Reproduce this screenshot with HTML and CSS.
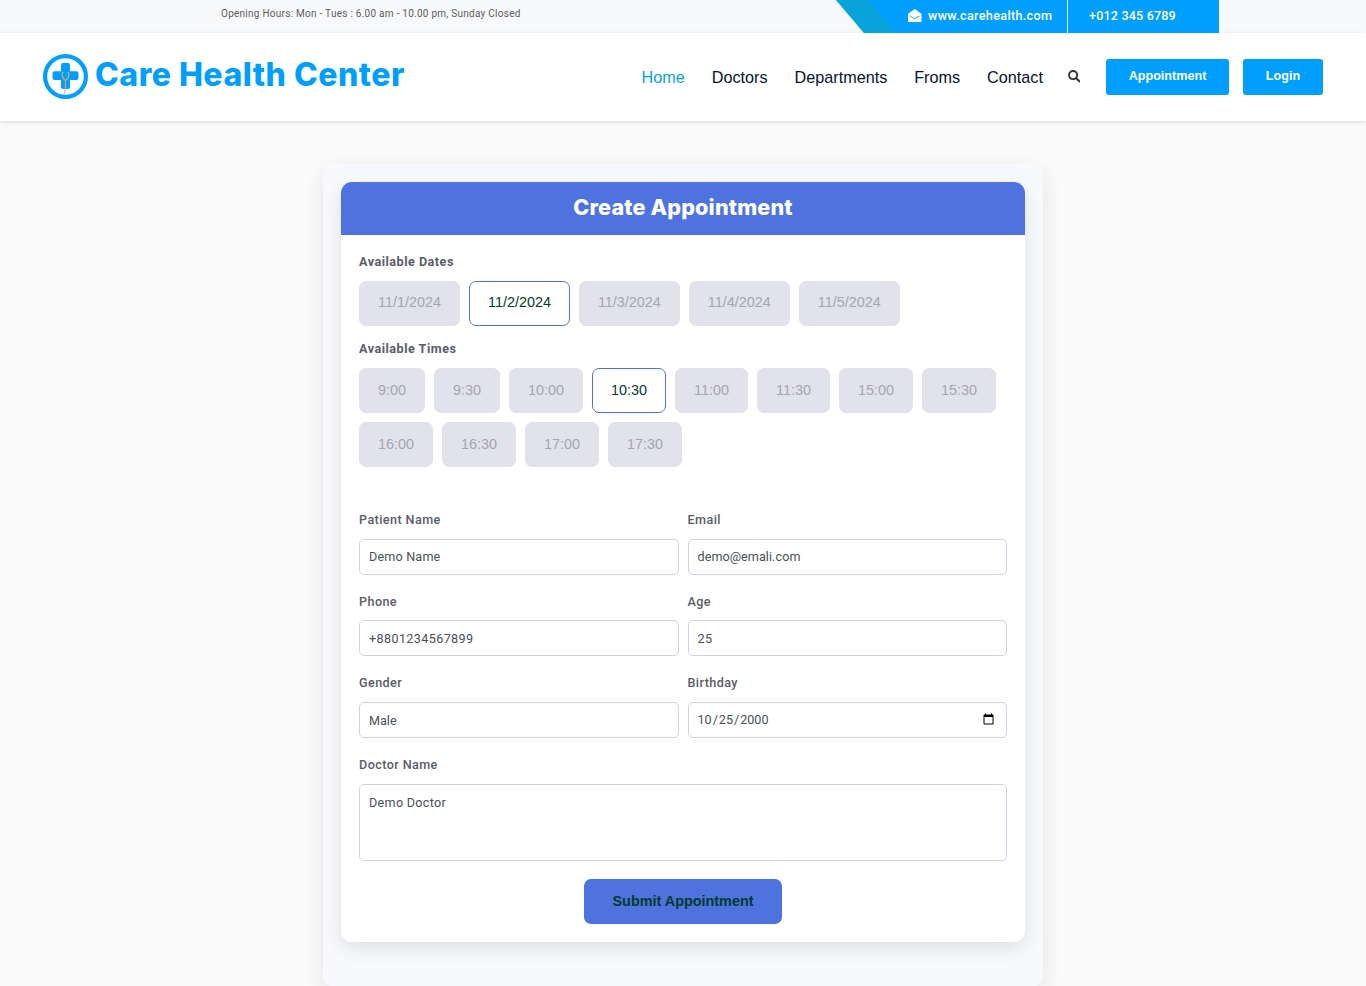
FILE: index.html
```html
<!DOCTYPE html>
<html lang="en">
<head>
<meta charset="utf-8">
<title>Care Health Center</title>
<link rel="stylesheet" href="styles.css">
</head>
<body>
<div class="topbar">
  <div class="hours">Opening Hours: Mon - Tues : 6.00 am - 10.00 pm, Sunday Closed</div>
  <div class="contact-strip">
    <div class="strip-mail">
      <svg class="mail" viewBox="0 0 14 14"><path d="M7 0 13.2 4.3Q14 4.9 14 5.8V12.6Q14 13.6 13 13.6H1Q0 13.6 0 12.6V5.8Q0 4.9.8 4.3Z" fill="#fff"/><path d="M2.3 7.2 6 9.7Q7 10.3 8 9.7L11.7 7.2" fill="none" stroke="#009fff" stroke-width="1"/></svg>
      <span>www.carehealth.com</span>
    </div>
    <div class="strip-phone">+012 345 6789</div>
  </div>
</div>
<header class="header">
  <div class="brand">
    <svg class="logo" viewBox="0 0 45 45">
      <circle cx="22.5" cy="22.5" r="20.4" fill="#fff" stroke="#009fff" stroke-width="4.2"/>
      <path d="M20 9H25.200Q27 9 27 11V17.200H33.500Q35.500 17.200 35.500 19.200V24Q35.500 26 33.500 26H27V33Q27 35 25.200 35H20Q18 35 18 33V26H11.500Q9.500 26 9.500 24V19.200Q9.500 17.200 11.500 17.200H18V11Q18 9 20 9Z" fill="#009fff"/>
      <path d="M20.600 18.200Q18.800 18 19.300 21Q19.700 25 22.500 26.500Q25.300 25 25.700 21Q26.200 18 24.400 18.200M22.500 26.500V35Q22.300 38.500 20.700 39.700" fill="none" stroke="#e0ad48" stroke-width="1.100"/>
    </svg>
    <span class="name">Care Health Center</span>
  </div>
  <nav class="nav">
    <a class="active">Home</a><a>Doctors</a><a>Departments</a><a>Froms</a><a>Contact</a>
  </nav>
  <svg class="search" viewBox="0 0 12 12"><circle cx="4.900" cy="4.900" r="3.900" fill="none" stroke="#333" stroke-width="1.800"/><path d="M7.800 7.800 10.900 10.900" stroke="#333" stroke-width="2" stroke-linecap="round"/></svg>
  <a class="btn">Appointment</a>
  <a class="btn login">Login</a>
</header>
<main class="panel">
  <form class="card">
    <h1 class="card-head">Create Appointment</h1>
    <div class="card-body">
      <div class="label strong">Available Dates</div>
      <div class="pills">
        <span class="pill">11/1/2024</span><span class="pill on">11/2/2024</span><span class="pill">11/3/2024</span><span class="pill">11/4/2024</span><span class="pill">11/5/2024</span>
      </div>
      <div class="label strong times">Available Times</div>
      <div class="pills slots">
        <span class="pill">9:00</span><span class="pill">9:30</span><span class="pill">10:00</span><span class="pill on">10:30</span><span class="pill">11:00</span><span class="pill">11:30</span><span class="pill">15:00</span><span class="pill">15:30</span><span class="pill">16:00</span><span class="pill">16:30</span><span class="pill">17:00</span><span class="pill">17:30</span>
      </div>
      <div class="fields">
        <label class="field"><span class="label">Patient Name</span><input class="input" value="Demo Name"></label>
        <label class="field"><span class="label">Email</span><input class="input email" value="demo@emali.com"></label>
        <label class="field"><span class="label low">Phone</span><input class="input phone" value="+8801234567899"></label>
        <label class="field"><span class="label low">Age</span><input class="input phone" value="25"></label>
        <label class="field"><span class="label">Gender</span><input class="input gender" value="Male"></label>
        <label class="field"><span class="label">Birthday</span><input class="input date" type="date" value="2000-10-25"></label>
        <label class="field wide"><span class="label">Doctor Name</span><textarea class="input area">Demo Doctor</textarea></label>
      </div>
      <button class="submit" type="button">Submit Appointment</button>
    </div>
  </form>
</main>
</body>
</html>
```
FILE: styles.css
```css
* { box-sizing: border-box; }
body {
  margin: 0;
  height: 986px;
  overflow: hidden;
  background: #fafafa;
  font-family: Roboto, "Liberation Sans", sans-serif;
  color: #5a5c69;
}
.topbar {
  display: flex;
  justify-content: space-between;
  height: 33px;
  padding: 0 147px 0 221px;
  background: #f8f9fa;
}
.hours {
  font-size: 10px;
  line-height: 27px;
  letter-spacing: 0.26px;
  color: #5c5c5c;
}
.contact-strip {
  display: flex;
  width: 383px;
  padding-left: 72px;
  clip-path: polygon(0 0, 100% 0, 100% 100%, 28px 100%);
  background: #009fff;
  position: relative;
  color: #fff;
  font-size: 12.600px;
  font-weight: 500;
  line-height: 32px;
}
.contact-strip::before {
  content: "";
  position: absolute;
  left: 0;
  top: 0;
  width: 60px;
  height: 33px;
  background: #08a3da;
  clip-path: polygon(0 0, 32px 0, 60px 100%, 28px 100%);
}
.strip-mail {
  display: flex;
  align-items: flex-start;
  gap: 6.500px;
  width: 160px;
  border-right: 1px solid #d9f0ff;
  letter-spacing: 0.33px;
}
.mail { width: 13.500px; height: 13.500px; margin-top: 8.500px; }
.strip-phone { padding-left: 21px; letter-spacing: 0.16px; }
.header {
  display: flex;
  align-items: flex-start;
  height: 88px;
  padding: 0 43px;
  background: #fff;
  box-shadow: 0 1px 4px rgba(0, 0, 0, 0.13);
}
.brand { display: flex; gap: 7px; width: 598.600px; padding-top: 21px; }
.logo { width: 45px; height: 45px; }
.name {
  font-family: Inter, sans-serif;
  font-size: 32px;
  line-height: 41px;
  font-weight: 800;
  letter-spacing: 0.5px;
  color: #009fff;
  white-space: nowrap;
}
.nav {
  display: flex;
  gap: 27px;
  padding-top: 34px;
  font: 16.200px/20px "Liberation Sans", sans-serif;
  color: #04142f;
}
.active { color: #0aa2dc; }
.search { width: 12.500px; height: 12.500px; margin: 37px 25px 0 25px; }
.btn {
  width: 123px;
  height: 36px;
  margin-top: 26px;
  border-radius: 3px;
  background: #009fff;
  color: #fff;
  text-align: center;
  font: bold 12.600px/34px "Liberation Sans", sans-serif;
}
.header .btn:not(.login) { margin-left: auto; }
.login { width: 80px; margin-left: 14px; }
.panel {
  width: 720px;
  height: 823px;
  margin: 43px auto 0;
  padding: 18px;
  border-radius: 11px;
  background: #f8f9fc;
  box-shadow: 0 7px 22px rgba(0, 0, 0, 0.09);
}
.card {
  height: 760px;
  border-radius: 11px;
  background: #fff;
  overflow: hidden;
  box-shadow: 0 7px 18px rgba(0, 0, 0, 0.1);
}
.card-head {
  margin: 0;
  height: 53px;
  background: #4e73df;
  color: #fff;
  text-align: center;
  font-family: Inter, sans-serif;
  font-size: 21.600px;
  line-height: 51px;
  font-weight: 800;
  letter-spacing: 0.15px;
}
.card-body { padding: 18px; }
.label {
  display: block;
  font-size: 12.600px;
  line-height: 18px;
  font-weight: 500;
  letter-spacing: 0.42px;
}
.low { padding-top: 1px; margin-bottom: -1px; }
.strong { font-weight: 700; letter-spacing: 0.5px; }
.times { margin-top: 14px; }
.pills { display: flex; flex-wrap: wrap; gap: 9px; margin-top: 10px; }
.pill {
  height: 45px;
  padding: 0 18px;
  border: 1px solid #e2e2ec;
  border-radius: 7px;
  background: #e2e2ec;
  color: #a3a6b0;
  font: 14.400px/41px "Liberation Sans", sans-serif;
}
.slots .pill { line-height: 43px; }
.pill.on { border-color: #4e73df; background: #fff; color: #013b2b; }
.fields {
  display: grid;
  grid-template-columns: 1fr 1fr;
  column-gap: 9px;
  row-gap: 17.700px;
  margin-top: 43.700px;
}
.wide { grid-column: 1 / -1; }
.input {
  display: block;
  width: 100%;
  height: 36px;
  margin: 10px 0 0;
  padding: 0 9px 1px;
  border: 1px solid #d1d1e4;
  border-radius: 5px;
  background: #fff;
  color: #495057;
  font: 12.600px Roboto, sans-serif;
  letter-spacing: 0.18px;
}
.email { letter-spacing: 0.06px; }
.phone { letter-spacing: 0.38px; padding-bottom: 0; }
.gender { padding-bottom: 0; letter-spacing: 0; }
.date { letter-spacing: 0; padding-left: 8px; padding-bottom: 2px; }
.area { height: 77px; padding: 9px; resize: none; line-height: 17px; letter-spacing: 0.3px; }
.submit {
  display: block;
  width: 198px;
  height: 45px;
  margin: 18px auto 0;
  padding: 0 0 1px;
  border: 0;
  border-radius: 7px;
  background: #4e73df;
  color: #013b2b;
  font: bold 14.400px "Liberation Sans", sans-serif;
}
```
